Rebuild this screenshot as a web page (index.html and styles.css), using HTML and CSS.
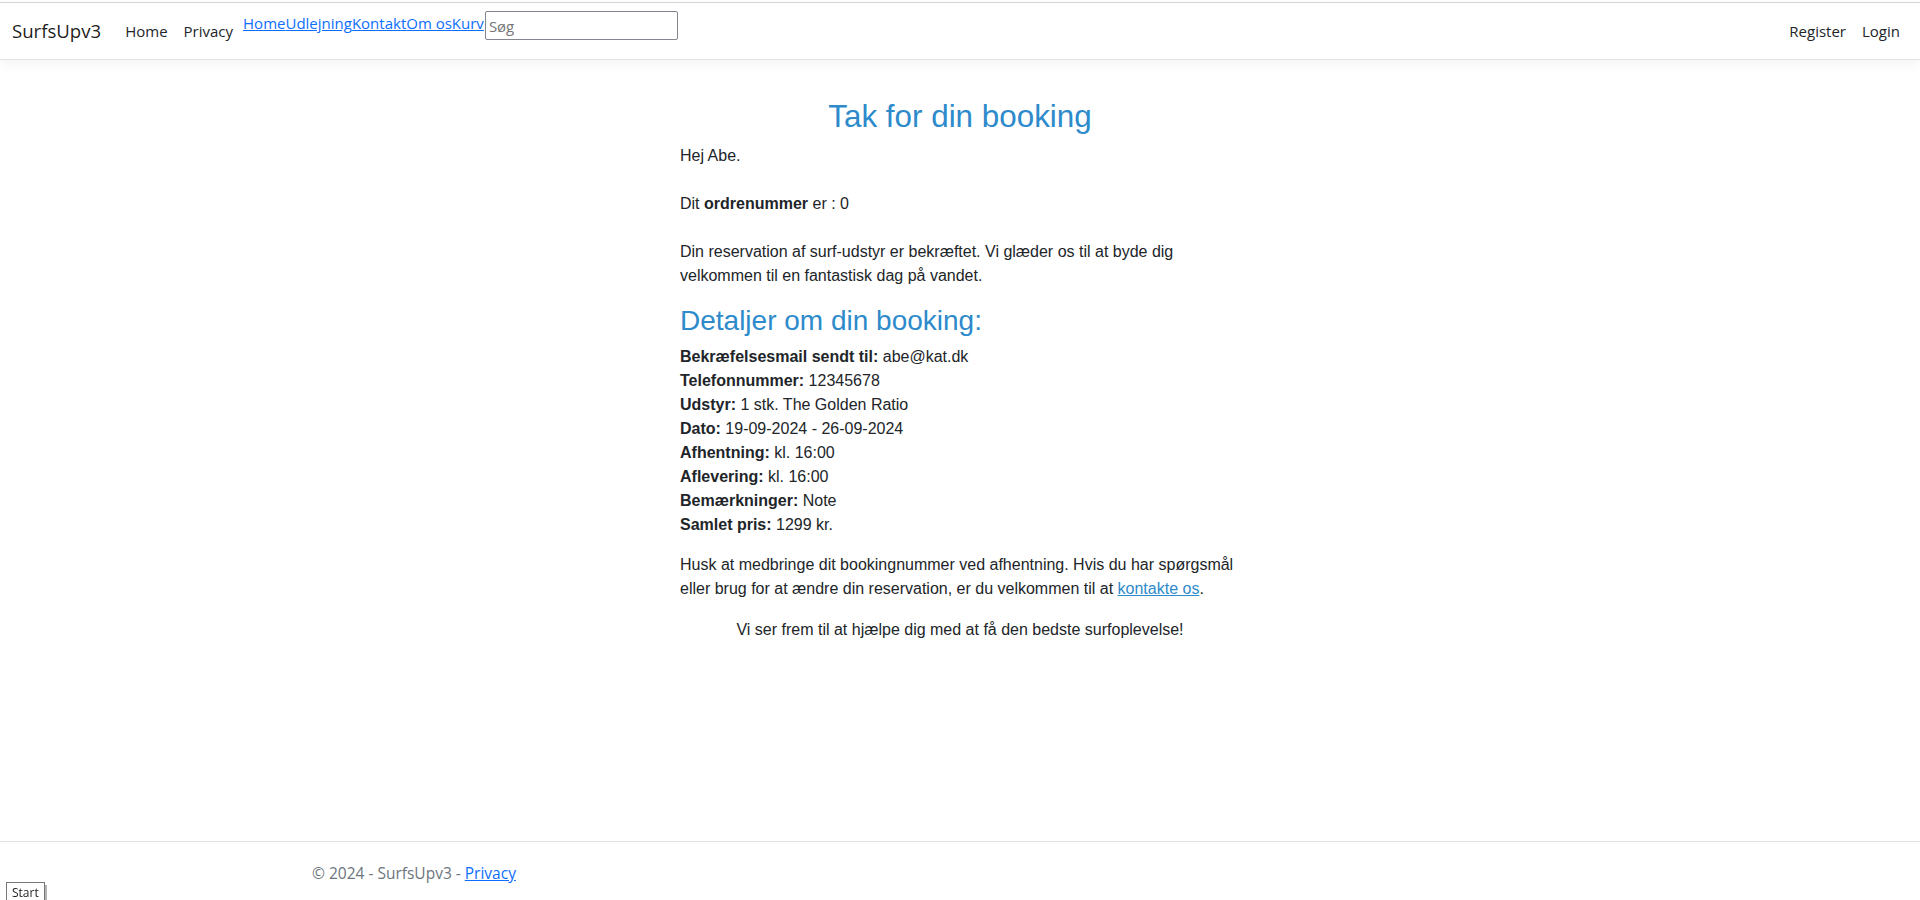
FILE: index.html
```html
<!DOCTYPE html>
<html lang="da">
<head>
<meta charset="utf-8">
<title>Tak for din booking - SurfsUpv3</title>
<link rel="stylesheet" href="styles.css">
</head>
<body>
<header class="site-header">
  <nav class="navbar">
    <div class="nav-inner">
      <a class="brand" href="#">SurfsUpv3</a>
      <ul class="nav-main">
        <li><a class="nav-link" href="#">Home</a></li>
        <li><a class="nav-link" href="#">Privacy</a></li>
      </ul>
      <div class="quick">
        <a href="#">Home</a><a href="#">Udlejning</a><a href="#">Kontakt</a><a href="#">Om os</a><a href="#">Kurv</a>
        <input class="search" type="text" placeholder="Søg">
      </div>
      <ul class="nav-user">
        <li><a class="nav-link" href="#">Register</a></li>
        <li><a class="nav-link" href="#">Login</a></li>
      </ul>
    </div>
  </nav>
</header>

<main class="main">
  <div class="booking">
    <h1 class="title">Tak for din booking</h1>
    <div class="text">
      <p>Hej Abe.<br><br>Dit <strong>ordrenummer</strong> er : 0<br><br>Din reservation af surf-udstyr er bekræftet. Vi glæder os til at byde dig velkommen til en fantastisk dag på vandet.</p>
      <h2 class="subtitle">Detaljer om din booking:</h2>
      <ul class="details">
        <li><strong>Bekræfelsesmail sendt til:</strong> abe@kat.dk</li>
        <li><strong>Telefonnummer:</strong> 12345678</li>
        <li><strong>Udstyr:</strong> 1 stk. The Golden Ratio</li>
        <li><strong>Dato:</strong> 19-09-2024 - 26-09-2024</li>
        <li><strong>Afhentning:</strong> kl. 16:00</li>
        <li><strong>Aflevering:</strong> kl. 16:00</li>
        <li><strong>Bemærkninger:</strong> Note</li>
        <li><strong>Samlet pris:</strong> 1299 kr.</li>
      </ul>
      <p>Husk at medbringe dit bookingnummer ved afhentning. Hvis du har spørgsmål eller brug for at ændre din reservation, er du velkommen til at <a class="contact" href="#">kontakte os</a>.</p>
    </div>
    <p class="closing">Vi ser frem til at hjælpe dig med at få den bedste surfoplevelse!</p>
  </div>
</main>

<footer class="footer">
  <div class="footer-inner">© 2024 - SurfsUpv3 - <a href="#">Privacy</a></div>
</footer>

<button class="start-btn" type="button">Start</button>
</body>
</html>
```

FILE: styles.css
```css
* { box-sizing: border-box; }

html, body { margin: 0; padding: 0; }

body {
  min-height: 100vh;
  display: flex;
  flex-direction: column;
  font-family: "Open Sans", "Noto Sans", sans-serif;
  font-size: 15px;
  line-height: 1.5;
  color: #212529;
  background: #fff;
}

/* ---------- header ---------- */
.site-header {
  padding-top: 2px;
  margin-bottom: 16px;
}

.navbar {
  border-top: 1px solid #d6d6d6;
  border-bottom: 1px solid #dee2e6;
  box-shadow: 0 4px 12px rgba(0, 0, 0, 0.05);
  padding: 8px 0;
  background: #fff;
}

.nav-inner {
  display: flex;
  align-items: center;
  padding: 0 12px;
  height: 40px;
}

.brand {
  font-size: 18.6px;
  line-height: 30px;
  padding: 5px 0;
  margin-right: 16px;
  color: rgba(0, 0, 0, 0.9);
  text-decoration: none;
}

.nav-main, .nav-user {
  display: flex;
  list-style: none;
  margin: 0;
  padding: 0;
}

.nav-user { margin-left: auto; }

.nav-link {
  display: block;
  padding: 8px;
  line-height: 24px;
  color: #212529;
  text-decoration: none;
}

.quick {
  align-self: flex-start;
  display: flex;
  align-items: flex-start;
  margin-left: 2px;
}

.quick a {
  color: #0d6efd;
  text-decoration: underline;
  line-height: 24px;
}

.search {
  width: 193px;
  height: 29px;
  margin: 0 0 0 1px;
  padding: 1px 3px;
  border: 1px solid #858590;
  border-radius: 2px;
  font-family: "Open Sans", "Noto Sans", sans-serif;
  font-size: 15px;
  color: #212529;
  background: #fff;
}

.search::placeholder { color: #767676; }

/* ---------- main ---------- */
.main {
  flex: 1 0 auto;
  font-family: "Liberation Sans", Arial, sans-serif;
  font-size: 16px;
  line-height: 24px;
  padding-top: 22px;
}

.booking {
  width: 580px;
  margin: 0 auto;
}

.title {
  margin: 0 0 8px;
  text-align: center;
  font-weight: 400;
  font-size: 31.4px;
  line-height: 1.2;
  color: #2d8acb;
}

.text { padding-left: 10px; }

.text p { margin: 0 0 16px; }

.subtitle {
  margin: 0 0 8px;
  font-weight: 400;
  font-size: 28px;
  line-height: 1.2;
  color: #2d8acb;
}

.details {
  list-style: none;
  margin: 0 0 16px;
  padding: 0;
}

.contact { color: #2d8acb; }

.closing {
  margin: 0;
  padding-top: 1px;
  text-align: center;
}

/* ---------- footer ---------- */
.footer {
  border-top: 1px solid #dee2e6;
  color: #6c757d;
  font-size: 15.5px;
  line-height: 54px;
  padding-top: 4px;
  white-space: nowrap;
}

.footer-inner {
  width: 1320px;
  margin: 0 auto;
  padding: 0 12px;
}

.footer a { color: #0d6efd; }

/* ---------- overlay start button ---------- */
.start-btn {
  position: fixed;
  left: 6px;
  bottom: -6px;
  height: 24px;
  padding: 0 5px 2px;
  font-family: "Open Sans", "Noto Sans", sans-serif;
  font-size: 12px;
  line-height: 20px;
  color: #222;
  background: #fff;
  border: 1px solid #767676;
  border-radius: 0;
  box-shadow: 2px 3px 0 #b5b5b5;
}
```
